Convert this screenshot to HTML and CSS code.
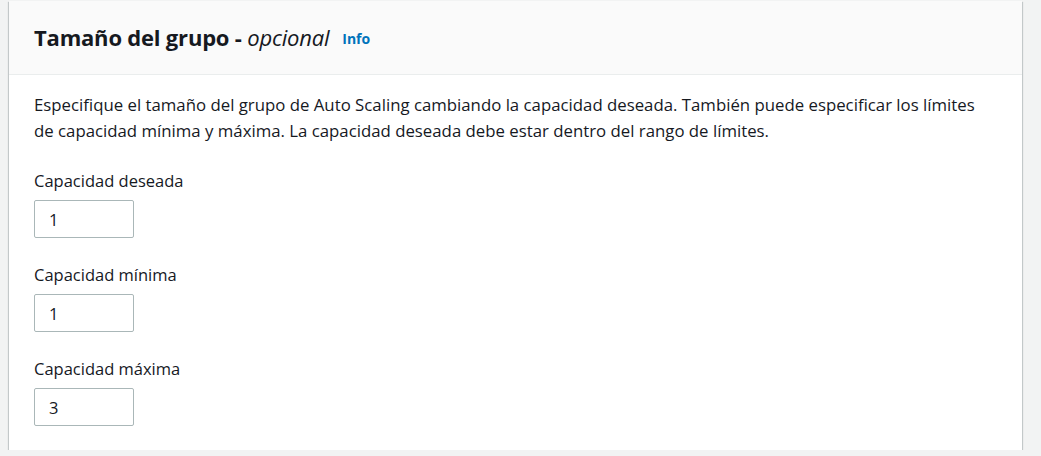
FILE: index.html
```html
<!DOCTYPE html>
<html lang="es">
<head>
<meta charset="utf-8">
<link rel="stylesheet" href="styles.css">
</head>
<body>
<div class="card">
  <div class="card-header">
    <h2 class="title">Tamaño del grupo - <i>opcional</i></h2>
    <a class="info" href="#">Info</a>
  </div>
  <div class="card-body">
    <p class="desc">Especifique el tamaño del grupo de Auto Scaling cambiando la capacidad deseada. También puede especificar los límites<br>de capacidad mínima y máxima. La capacidad deseada debe estar dentro del rango de límites.</p>
    <div class="field">
      <label class="label">Capacidad deseada</label>
      <input class="input" type="text" value="1">
    </div>
    <div class="field">
      <label class="label">Capacidad mínima</label>
      <input class="input" type="text" value="1">
    </div>
    <div class="field">
      <label class="label">Capacidad máxima</label>
      <input class="input" type="text" value="3">
    </div>
  </div>
</div>
</body>
</html>
```
FILE: styles.css
```css
html, body {
  margin: 0;
  padding: 0;
  background: #f2f3f3;
  font-family: "Open Sans", "Noto Sans", sans-serif;
  color: #16191f;
}
.card {
  margin: 1px 0 0 9px;
  width: 1013px;
  height: 449px;
  background: #fff;
  box-shadow: 0 1px 1px 0 rgba(0,28,36,.3), 1px 1px 1px 0 rgba(0,28,36,.15), -1px 1px 1px 0 rgba(0,28,36,.15);
  box-sizing: border-box;
}
.card-header {
  background: #fafafa;
  border-bottom: 1px solid #eaeded;
  height: 74px;
  box-sizing: border-box;
  display: flex;
  align-items: center;
  padding: 0 25px 2px;
  gap: 13px;
}
.title {
  margin: 0;
  font-size: 22px;
  font-weight: 700;
  letter-spacing: -0.2px;
}
.title i {
  font-weight: 400;
}
.info {
  color: #0073bb;
  font-size: 14px;
  font-weight: 700;
  text-decoration: none;
  padding-top: 4px;
}
.card-body {
  padding: 17px 0 0 25px;
}
.desc {
  margin: 0 0 25px;
  font-size: 16.8px;
  line-height: 26px;
  white-space: nowrap;
}
.field {
  display: flex;
  flex-direction: column;
  align-items: flex-start;
  margin-bottom: 25px;
}
.label {
  font-size: 16.5px;
  line-height: 24px;
  margin-bottom: 7px;
}
.input {
  width: 100px;
  height: 38px;
  box-sizing: border-box;
  border: 1px solid #aab7b8;
  border-radius: 2px;
  padding: 0 14px;
  font-family: inherit;
  font-size: 16.5px;
  color: #16191f;
  background: #fff;
}
```
